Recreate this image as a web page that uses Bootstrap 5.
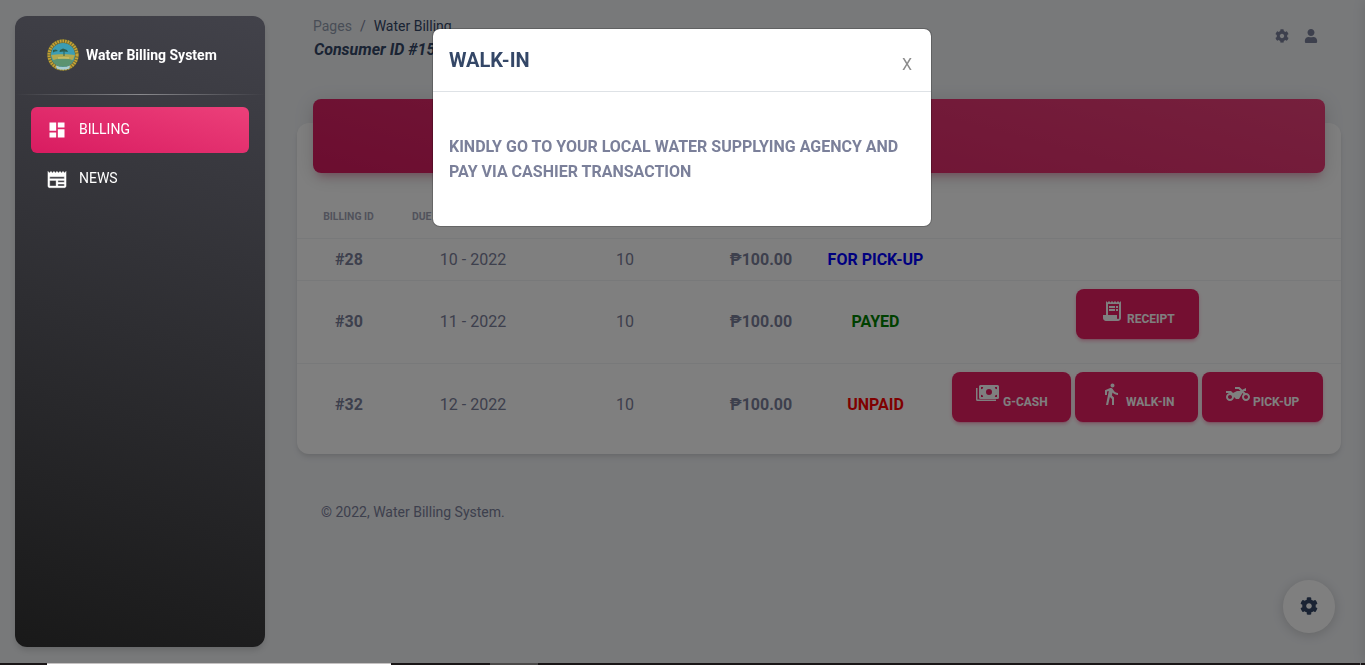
<!DOCTYPE html>
<html lang="en">
<head>
<meta charset="utf-8">
<meta name="viewport" content="width=device-width, initial-scale=1">
<title>Water Billing System</title>
<link href="https://cdn.jsdelivr.net/npm/bootstrap@5.3.0/dist/css/bootstrap.min.css" rel="stylesheet">
<style>
html,body{height:100%;overflow:hidden}
body{font-family:Roboto,"Liberation Sans",sans-serif;background:#f0f2f5;color:#7b809a;font-size:16px}
svg{fill:currentColor;display:block;flex:none}
.shell{height:665px}
.side{width:250px;height:631px;margin:16px 0 0 15px;border-radius:12px;background:linear-gradient(195deg,#42424a,#191919);z-index:1060;box-shadow:0 4px 6px -1px rgba(0,0,0,.15);color:#fff}
.brand{height:78px;padding-left:32px;gap:7px;font-size:14px;font-weight:700}
.rule{height:1px;background:linear-gradient(90deg,transparent,rgba(255,255,255,.4),transparent)}
.side-link{height:46px;margin:0 16px 3px;padding-left:16px;gap:12px;font-size:14px;color:#fff;border-radius:6px;text-decoration:none}
.side-link svg{width:20px;height:20px}
.side-link span{margin-bottom:2px}
.side-link .paper{margin-top:2px}
.side-link.on{background:linear-gradient(195deg,#ec407a,#d81b60)}
.page{width:1044px;margin-left:32px}
.top{height:99px;padding:17px 23px 0 16px}
.crumb{font-size:14px;line-height:19px}
.crumb .sep{padding:0 8px}
.ink{color:#344767}
.who{font-size:16px;font-weight:700;font-style:italic;line-height:28px;margin-left:1px}
.tools{gap:15px;padding-top:12px}
.sheet{border-radius:12px;background:#fff;height:331px;margin-top:24px;box-shadow:0 4px 6px -1px rgba(0,0,0,.1),0 2px 4px -1px rgba(0,0,0,.06)}
.band{height:74px;margin:-24px 16px 0;border-radius:8px;background:linear-gradient(195deg,#ec407a,#d81b60);box-shadow:0 4px 20px 0 rgba(0,0,0,.14),0 7px 10px -5px rgba(233,30,99,.4)}
.bills{table-layout:fixed;width:1044px;margin-top:21px;color:#7b809a;text-align:center;border-collapse:collapse}
.bills th{height:44px;font-size:10.4px;font-weight:700;opacity:.7;white-space:nowrap;padding:2px 1px 0 0}
.bills td{padding:0;vertical-align:middle;border-top:1px solid #f0f2f5;height:83px}
.bills .slim td{height:42px;padding-top:1px}
.due{margin-left:11px}
.state{font-weight:700;margin-left:-1px}
.acts{gap:4px;height:82px;padding:8px 2px 0 0}
.pay{height:50px;border-radius:8px;background:#e91e63;color:#fff;font-size:12px;font-weight:700;padding:2px 24px 0;box-shadow:0 3px 3px 0 rgba(233,30,99,.15),0 3px 1px -2px rgba(233,30,99,.2),0 1px 5px 0 rgba(233,30,99,.15)}
.pay svg{margin-bottom:8px}
.cap{margin:8px 0 0 3.5px;white-space:nowrap}
.foot{font-size:14px;margin:48px 0 0 24px}
.gear{right:30px;bottom:32px;width:52px;height:53px;padding-bottom:1px;border-radius:50%;background:#fff;box-shadow:0 2px 12px 0 rgba(0,0,0,.16);z-index:990}
.drawer{left:1368px;top:0;width:300px;height:663px;box-shadow:0 0 14px rgba(0,0,0,.18)}
.notice .modal-dialog{width:500px;max-width:500px;margin-top:28px;margin-left:432px}
.notice .modal-content{height:199px;border-radius:8px;border:1px solid rgba(0,0,0,.2);overflow:hidden}
.notice .modal-header{height:63px;padding:0 16px;border-bottom:1px solid #dee2e6;flex:none}
.notice h5{font-size:20px;font-weight:700;line-height:24px}
.notice .x{border:0;background:none;padding:0;color:#8c8c8c;margin:10px 3px 0 0}
.notice p{font-weight:700;line-height:25px;margin-top:26px}
.strip{height:2px;background:#191516;z-index:1080}
.strip .lit{width:344px;margin-left:47px;background:#fff;border-top:1px solid #c5c2c2}
.strip .dim{width:48px;margin-left:99px;background:#4b4949}
.strip .edge{width:1px;margin-right:4px;background:#777}
</style>
</head>
<body>
<svg width="0" height="0" class="position-absolute"><defs>
<path id="cog" d="M487.4 315.7l-42.6-24.6c4.3-23.2 4.3-47 0-70.2l42.6-24.6c4.9-2.8 7.1-8.6 5.5-14-11.1-35.6-30-67.8-54.7-94.6-3.8-4.1-10-5.1-14.8-2.3L380.8 110c-17.9-15.4-38.5-27.3-60.8-35.1V25.8c0-5.6-3.9-10.5-9.4-11.7-36.7-8.2-74.3-7.8-109.2 0-5.5 1.2-9.4 6.1-9.4 11.7V75c-22.2 7.9-42.8 19.8-60.8 35.1L88.7 85.5c-4.9-2.8-11-1.9-14.8 2.3-24.7 26.7-43.6 58.9-54.7 94.6-1.7 5.4.6 11.2 5.5 14L67.3 221c-4.3 23.2-4.3 47 0 70.2l-42.6 24.6c-4.9 2.8-7.1 8.6-5.5 14 11.1 35.6 30 67.8 54.7 94.6 3.8 4.1 10 5.1 14.8 2.3l42.6-24.6c17.9 15.4 38.5 27.3 60.8 35.1v49.2c0 5.6 3.9 10.5 9.4 11.7 36.7 8.2 74.3 7.8 109.2 0 5.5-1.2 9.4-6.1 9.4-11.7v-49.2c22.2-7.9 42.8-19.8 60.8-35.1l42.6 24.6c4.9 2.8 11 1.9 14.8-2.3 24.7-26.7 43.6-58.9 54.7-94.6 1.5-5.5-.7-11.3-5.6-14.1zM256 336c-44.1 0-80-35.9-80-80s35.9-80 80-80 80 35.9 80 80-35.9 80-80 80z"/>
</defs></svg>

<div class="shell d-flex">
  <aside class="side position-relative flex-shrink-0">
    <div class="brand d-flex align-items-center">
      <svg width="32" height="32" viewBox="0 0 32 32">
        <circle cx="16" cy="16" r="15.8" fill="#6b6a35"/>
        <circle cx="16" cy="16" r="14" fill="none" stroke="#c9a233" stroke-width="3" stroke-dasharray="1.6 1"/>
        <circle cx="16" cy="16" r="12" fill="#3c9db3"/>
        <path d="M4.2 16C9 15 23 15 27.8 16A12 12 0 0 1 4.2 16z" fill="#b1a94f"/>
        <path d="M5.5 21.5c7-3 14-3 21 0A12 12 0 0 1 5.5 21.5z" fill="#5b9370"/>
        <path d="M13 11l3-1.500 4 1.500 1 2-3.500-.5V17h-1v-4.500L12.500 13zM6 11l3-.5 2 1.500-3 .5-2 1z" fill="#2c5e4f"/>
        <path d="M9 26.500q7 3 14 0l-.5 3q-6.500 2.500-13 0z" fill="#a9cdd2"/>
        <path d="M11 19h11" stroke="#d6c66c" stroke-width="1.2"/>
      </svg>
      <span>Water Billing System</span>
    </div>
    <div class="rule mb-2"></div>
    <nav class="pt-1">
      <a class="side-link on d-flex align-items-center" href="#"><svg viewBox="0 0 24 24"><path d="M3 13h8V3H3v10zm0 8h8v-6H3v6zm10 0h8V11h-8v10zm0-18v6h8V3h-8z"/></svg><span>BILLING</span></a>
      <a class="side-link d-flex align-items-center" href="#"><svg class="paper" viewBox="1 1.500 22 22"><path d="M22 3l-1.670 1.670L18.670 3 17 4.670 15.330 3l-1.660 1.670L12 3l-1.670 1.670L8.670 3 7 4.670 5.330 3 3.670 4.670 2 3v16c0 1.100.9 2 2 2h16c1.100 0 2-.9 2-2V3zM11 19H4v-6h7v6zm9 0h-7v-2h7v2zm0-4h-7v-2h7v2zm0-4H4V9h16v2z" stroke="currentColor" stroke-width=".4"/></svg><span>NEWS</span></a>
    </nav>
  </aside>

  <main class="page flex-shrink-0">
    <header class="top d-flex justify-content-between align-items-start">
      <div>
        <div class="crumb"><span class="opacity-50 ink">Pages</span><span class="sep">/</span><span class="ink">Water Billing</span></div>
        <div class="who ink">Consumer ID #15</div>
      </div>
      <div class="tools d-flex">
        <svg width="14" height="14" viewBox="0 0 512 512"><use href="#cog"/></svg>
        <svg width="14" height="14" viewBox="-32 0 512 512"><path d="M224 256c70.700 0 128-57.300 128-128S294.700 0 224 0 96 57.300 96 128s57.300 128 128 128zm89.600 32h-16.700c-22.200 10.200-46.900 16-72.900 16s-50.600-5.800-72.900-16h-16.700C60.200 288 0 348.200 0 422.400V464c0 26.500 21.500 48 48 48h352c26.500 0 48-21.500 48-48v-41.600c0-74.200-60.200-134.400-134.400-134.400z"/></svg>
      </div>
    </header>

    <section class="sheet d-flex flex-column">
      <div class="band flex-shrink-0"></div>
      <table class="bills">
        <colgroup><col style="width:104px"><col style="width:144px"><col style="width:160px"><col style="width:112px"><col style="width:118px"><col style="width:406px"></colgroup>
        <thead><tr><th>BILLING ID</th><th class="text-start"><span class="due">DUE DATE</span></th><th></th><th></th><th></th><th></th></tr></thead>
        <tbody>
          <tr class="slim"><td><b>#28</b></td><td>10 - 2022</td><td>10</td><td><b>₱100.00</b></td><td><b class="state" style="color:#00f">FOR PICK-UP</b></td><td></td></tr>
          <tr><td><b>#30</b></td><td>11 - 2022</td><td>10</td><td><b>₱100.00</b></td><td><b class="state" style="color:green">PAYED</b></td>
            <td><div class="acts d-flex justify-content-center"><div class="pay d-flex align-items-center" style="width:123px"><svg width="24" height="24" viewBox="0 0 24 24"><path d="M19.500 3.500L18 2l-1.500 1.500L15 2l-1.500 1.500L12 2l-1.500 1.500L9 2 7.500 3.500 6 2v14H3v3c0 1.660 1.340 3 3 3h12c1.660 0 3-1.340 3-3V2l-1.500 1.500zM19 19c0 .55-.45 1-1 1s-1-.45-1-1v-3H8V5h11v14z"/><path d="M9 7h6v2H9zM16 7h2v2h-2zM9 10h6v2H9zM16 10h2v2h-2z"/></svg><span class="cap">RECEIPT</span></div></div></td></tr>
          <tr><td><b>#32</b></td><td>12 - 2022</td><td>10</td><td><b>₱100.00</b></td><td><b class="state" style="color:red">UNPAID</b></td>
            <td><div class="acts d-flex justify-content-center">
              <div class="pay d-flex align-items-center" style="width:119px"><svg width="24" height="24" viewBox="0 0 24 24"><path fill-rule="evenodd" d="M4.500 3h17q1.500 0 1.500 1.500v11q0 1.500-1.500 1.500h-17q-1.500 0-1.500-1.500v-11Q3 3 4.500 3zM13 7a3 3 0 1 0 0 6 3 3 0 0 0 0-6zM5 5v2.200a2.200 2.200 0 0 0 2.200-2.200zm16 0h-2.200a2.200 2.200 0 0 0 2.200 2.200zM5 15h2.200a2.200 2.200 0 0 0-2.200-2.200zm16 0v-2.200a2.200 2.200 0 0 0-2.200 2.200z"/><path d="M0 6h1.500v11.500H20V19H1.500Q0 19 0 17.500z"/></svg><span class="cap">G-CASH</span></div>
              <div class="pay d-flex align-items-center" style="width:123px"><svg width="24" height="24" viewBox="0 0 24 24"><path d="M13.500 5.500c1.100 0 2-.9 2-2s-.9-2-2-2-2 .9-2 2 .9 2 2 2zM9.800 8.900L7 23h2.100l1.800-8 2.100 2v6h2v-7.500l-2.100-2 .6-3C14.800 12 16.800 13 19 13v-2c-1.900 0-3.500-1-4.300-2.400l-1-1.600c-.4-.6-1-1-1.700-1-.3 0-.5.1-.8.1L6 8.300V13h2V9.600l1.800-.7"/></svg><span class="cap">WALK-IN</span></div>
              <div class="pay d-flex align-items-center" style="width:121px"><svg width="24" height="24" viewBox="0 0 24 24"><path d="M20 11c-.18 0-.36.03-.53.05L17.410 9H20V6l-3.720 1.860L13.410 5H9v2h3.590l2 2H11l-4 2-2-2H0v2h4c-2.210 0-4 1.790-4 4s1.790 4 4 4 4-1.790 4-4l2 2h3l3.490-6.100 1.010 1.010C16.590 12.640 16 13.750 16 15c0 2.210 1.790 4 4 4s4-1.790 4-4-1.790-4-4-4zM4 17c-1.100 0-2-.9-2-2s.9-2 2-2 2 .9 2 2-.9 2-2 2zm16 0c-1.100 0-2-.9-2-2s.9-2 2-2 2 .9 2 2-.9 2-2 2z"/></svg><span class="cap">PICK-UP</span></div>
            </div></td></tr>
        </tbody>
      </table>
    </section>
    <footer class="foot">© 2022, Water Billing System.</footer>
  </main>
</div>

<div class="gear position-fixed d-flex align-items-center justify-content-center ink"><svg width="18" height="18" viewBox="0 0 512 512"><use href="#cog"/></svg></div>
<div class="drawer position-fixed"></div>

<div class="modal-backdrop show"></div>
<div class="modal show d-block notice" tabindex="-1">
  <div class="modal-dialog">
    <div class="modal-content">
      <div class="modal-header"><h5 class="modal-title ink">WALK-IN</h5><button class="x">X</button></div>
      <div class="modal-body"><p>KINDLY GO TO YOUR LOCAL WATER SUPPLYING AGENCY AND PAY VIA CASHIER TRANSACTION</p></div>
    </div>
  </div>
</div>

<div class="strip fixed-bottom d-flex"><div class="lit"></div><div class="dim"></div><div class="edge ms-auto"></div></div>
<script src="https://cdn.jsdelivr.net/npm/bootstrap@5.3.0/dist/js/bootstrap.bundle.min.js"></script>
</body>
</html>
